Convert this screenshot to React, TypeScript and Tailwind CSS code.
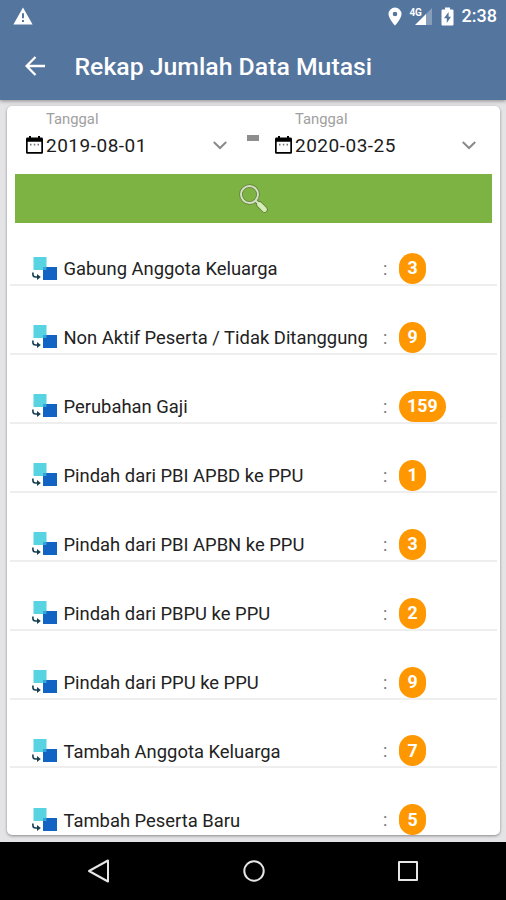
import type { ReactNode } from "react";

interface Mutasi {
  label: string;
  total: number;
}

const items: Mutasi[] = [
  { label: "Gabung Anggota Keluarga", total: 3 },
  { label: "Non Aktif Peserta / Tidak Ditanggung", total: 9 },
  { label: "Perubahan Gaji", total: 159 },
  { label: "Pindah dari PBI APBD ke PPU", total: 1 },
  { label: "Pindah dari PBI APBN ke PPU", total: 3 },
  { label: "Pindah dari PBPU ke PPU", total: 2 },
  { label: "Pindah dari PPU ke PPU", total: 9 },
  { label: "Tambah Anggota Keluarga", total: 7 },
  { label: "Tambah Peserta Baru", total: 5 },
];

function StatusBar() {
  return (
    <div className="flex h-8 items-center pl-[13px] pr-[9px] text-white">
      <svg width="20" height="18" viewBox="0 0 20 18" fill="currentColor">
        <path fillRule="evenodd" d="M10 .5 19.6 17.5H.4ZM9 6.3v5h2v-5ZM9 12.9v2h2v-2Z" />
      </svg>
      <div className="ml-auto flex items-center">
        <svg width="14" height="19" viewBox="0 0 14 19" fill="currentColor">
          <path fillRule="evenodd" d="M7 .5A6.5 6.5 0 0 0 .5 7C.5 11.8 7 18.5 7 18.5S13.5 11.8 13.5 7A6.5 6.5 0 0 0 7 .5Zm0 4.2a2.3 2.3 0 1 1 0 4.6 2.3 2.3 0 0 1 0-4.6Z" />
        </svg>
        <div className="relative ml-[8px] h-[19px] w-[23px]">
          <span className="absolute left-0 top-px text-[10px] font-bold leading-[9px] tracking-tight">4G</span>
          <svg className="absolute inset-0" width="23" height="19" viewBox="0 0 23 19" fill="currentColor">
            <path opacity=".3" d="M22 1v17h-6V7Z" />
            <path d="M16 7v11H5Z" />
          </svg>
        </div>
        <svg className="ml-[8px]" width="13" height="19" viewBox="0 0 13 19" fill="currentColor">
          <path fillRule="evenodd" d="M4 .5h5v2h2.5a1 1 0 0 1 1 1v14a1 1 0 0 1-1 1h-10a1 1 0 0 1-1-1v-14a1 1 0 0 1 1-1H4ZM7.6 5 3 11.3h2.8V16L10 9.8H7.6Z" />
        </svg>
        <span className="ml-[8px] text-[18px] font-medium leading-none">2:38</span>
      </div>
    </div>
  );
}

function CalendarIcon() {
  return (
    <svg className="shrink-0" width="17" height="18" viewBox="0 0 17 18">
      <path fill="#000" fillRule="evenodd" d="M3 0h2v1.6h7V0h2v1.6h1.5A1.5 1.5 0 0 1 17 3v13.5a1.3 1.3 0 0 1-1.3 1.3H1.3A1.3 1.3 0 0 1 0 16.5V3a1.5 1.5 0 0 1 1.5-1.4H3ZM1.7 5.8v10.3h13.6V5.8Z" />
      <path stroke="#777" strokeWidth="1.7" d="M4 8.6h1.5M7.8 8.6h1.5M11.5 8.6H13" />
    </svg>
  );
}

function DateField({ value }: { value: string }) {
  return (
    <div className="w-[202px]">
      <p className="ml-5 text-[14.8px] leading-[18px] text-[#a0a0a0]">Tanggal</p>
      <div className="flex h-[34px] items-center">
        <CalendarIcon />
        <span className="ml-[3px] pt-[2px] text-[19px] tracking-[0.5px] text-[#1c1c1c]">{value}</span>
        <svg className="ml-auto mr-px" width="14" height="9" viewBox="0 0 14 9" fill="none" stroke="#8a8a8a" strokeWidth="2">
          <path d="m.8 1 6.2 6 6.2-6" />
        </svg>
      </div>
    </div>
  );
}

function SearchIcon() {
  return (
    <svg className="mr-px" width="29" height="29" viewBox="0 0 29 29" fill="none">
      <circle cx="10.5" cy="10.5" r="8.5" stroke="#648138" strokeWidth="3.6" />
      <path d="m16.5 16.5 3 3" stroke="#648138" strokeWidth="4" />
      <path d="m20.5 20.5 5 5" stroke="#648138" strokeWidth="6.4" strokeLinecap="round" />
      <circle cx="10.5" cy="10.5" r="8.5" stroke="#d3dfc5" strokeWidth="2" />
      <path d="m16.500 16.500 3 3" stroke="#d3dfc5" strokeWidth="2" />
      <path d="m20.500 20.500 5 5" stroke="#d5edb9" strokeWidth="4.800" strokeLinecap="round" />
    </svg>
  );
}

function MutasiIcon() {
  return (
    <svg className="shrink-0" width="25" height="24" viewBox="0 0 25 24">
      <path fill="#57d3e2" d="M1.5 0h13v13h-13Z" />
      <path fill="#1264c4" d="M11 10h14v13H11Z" />
      <path fill="#35a5d8" d="M11 10h3.5v3H11Z" />
      <path fill="none" stroke="#173e50" strokeWidth="1.6" d="M.9 15.5v1.8q0 2.7 2.7 2.7H6" />
      <path fill="#173e50" d="m5 17 3.8 3L5 23Z" />
    </svg>
  );
}

function MutasiRow({ label, total }: Mutasi) {
  return (
    <li className="flex h-[68.93px] items-end border-b-2 border-[#eeeeee] pl-[22px] first:h-[63px] last:border-transparent">
      <div className="flex h-[31px] w-full items-center">
        <MutasiIcon />
        <span className="ml-[6.5px] w-[319.5px] whitespace-nowrap pt-px text-[18.4px] text-[#222]">{label}</span>
        <span className="w-[16px] text-[18px] text-[#777]">:</span>
        <span className="flex h-[31px] min-w-[27px] items-center justify-center rounded-full bg-[#ff9800] px-2 text-[17.8px] font-bold text-white">
          {total}
        </span>
      </div>
    </li>
  );
}

function NavButton({ children }: { children: ReactNode }) {
  return (
    <svg width="24" height="24" viewBox="0 0 24 24" fill="none" stroke="#e6e6e6" strokeWidth="2" strokeLinejoin="round">
      {children}
    </svg>
  );
}

export default function App() {
  return (
    <div className="flex h-[900px] w-[506px] flex-col overflow-hidden bg-[#e4e4e6] font-[Roboto,sans-serif]">
      <header className="z-10 h-[100px] shrink-0 bg-[#54759e] shadow-[0_1px_4px_rgba(0,0,0,0.4)]">
        <StatusBar />
        <div className="flex h-[68px] items-center pl-[25px] text-white">
          <svg width="20" height="20" viewBox="0 0 20 20" fill="none" stroke="currentColor" strokeWidth="2.3">
            <path d="M20 10H2M10.5 1 1.6 10l8.9 9" />
          </svg>
          <h1 className="ml-[29.5px] whitespace-nowrap pt-[2px] text-[24.8px] font-medium">Rekap Jumlah Data Mutasi</h1>
        </div>
      </header>

      <main className="h-[742px] pl-[7px] pr-[6px] pt-[6px]">
        <section className="h-[729px] overflow-hidden rounded-[5px] bg-white shadow-[0_1px_3px_rgba(0,0,0,0.4)]">
          <div className="flex h-[68px] pl-[19px] pt-[4px]">
            <DateField value="2019-08-01" />
            <div className="ml-[19px] mr-[16px] mt-[25px] h-[6px] w-[12px] shrink-0 bg-[#8e8e8e]" />
            <DateField value="2020-03-25" />
          </div>
          <button className="mx-[8px] flex h-[49px] w-[477px] items-center justify-center bg-[#7cb342]">
            <SearchIcon />
          </button>
          <ul className="mx-[3px]">
            {items.map((item) => (
              <MutasiRow key={item.label} {...item} />
            ))}
          </ul>
        </section>
      </main>

      <nav className="flex h-[58px] shrink-0 items-center justify-between bg-black pl-[87px] pr-[86px]">
        <NavButton>
          <path d="M21 1.5v21L2 12Z" />
        </NavButton>
        <NavButton>
          <circle cx="12" cy="12" r="9.7" />
        </NavButton>
        <NavButton>
          <path d="M3 3h18v18H3Z" />
        </NavButton>
      </nav>
    </div>
  );
}
